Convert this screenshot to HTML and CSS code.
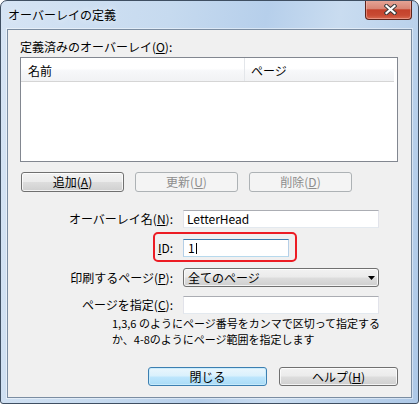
FILE: index.html
```html
<!DOCTYPE html>
<html lang="ja">
<head>
<meta charset="utf-8">
<title>オーバーレイの定義</title>
<link rel="stylesheet" href="styles.css">
</head>
<body>
<div class="window">
  <div class="titlebar">
    <span class="title">オーバーレイの定義</span>
    <div class="close">
      <svg width="13" height="11" viewBox="0 0 13 11">
        <path d="M2.5 2 L10.5 9 M10.5 2 L2.5 9" stroke="#3a3a3a" stroke-width="4.2" stroke-linecap="square" fill="none"/>
        <path d="M2.5 2 L10.5 9 M10.5 2 L2.5 9" stroke="#ffffff" stroke-width="2.2" stroke-linecap="square" fill="none"/>
      </svg>
    </div>
  </div>
  <div class="client">
    <div class="group-label">定義済みのオーバーレイ(<u>O</u>):</div>
    <div class="listview">
      <div class="lv-header">
        <div class="col col-name">名前</div>
        <div class="col col-page">ページ</div>
      </div>
    </div>
    <div class="btn-row">
      <div class="btn">追加(<u>A</u>)</div>
      <div class="btn disabled">更新(<u>U</u>)</div>
      <div class="btn disabled">削除(<u>D</u>)</div>
    </div>
    <div class="form">
      <div class="field">
        <span class="field-label">オーバーレイ名(<u>N</u>):</span>
        <div class="input">LetterHead</div>
      </div>
      <div class="field id-field">
        <div class="id-box">
          <span class="id-label"><u>I</u>D:</span>
          <div class="input focused">1<span class="caret"></span></div>
        </div>
      </div>
      <div class="field select-field">
        <span class="field-label">印刷するページ(<u>P</u>):</span>
        <div class="select">
          <span>全てのページ</span>
          <svg width="7" height="4" viewBox="0 0 7 4"><path d="M0 0 H7 L3.5 4 Z" fill="#000"/></svg>
        </div>
      </div>
      <div class="field spec-field">
        <span class="field-label">ページを指定(<u>C</u>):</span>
        <div class="input"></div>
      </div>
      <div class="hint">
        <div class="hint-line">1,3,6 のようにページ番号をカンマで区切って指定する</div>
        <div class="hint-line">か、4-8のようにページ範囲を指定します</div>
      </div>
    </div>
    <div class="footer">
      <div class="btn wide default">閉じる</div>
      <div class="btn wide">ヘルプ(<u>H</u>)</div>
    </div>
  </div>
</div>
</body>
</html>
```
FILE: styles.css
```css
* { box-sizing: border-box; }

body {
  margin: 0;
  background: #ffffff;
  font: 12px/14px "Noto Sans CJK JP", "Noto Sans", sans-serif;
  color: #000;
}

u { text-decoration: underline; text-underline-offset: 1px; }

.window {
  width: 419px;
  height: 404px;
  border: 1px solid #3f4f62;
  border-radius: 7px 7px 3px 3px;
  background: linear-gradient(100deg, #d6e4f4 0%, #c6daef 35%, #b6cfeb 55%, #c9dcf0 70%, #adc8e7 100%);
  padding: 0 6px 5px 6px;
  display: flex;
  flex-direction: column;
  overflow: hidden;
}

.titlebar {
  height: 28px;
  display: flex;
  justify-content: space-between;
  align-items: flex-start;
}

.title {
  margin: 7px 0 0 1px;
  color: #000;
  text-shadow: 0 0 6px rgba(255,255,255,0.8);
}

.close {
  margin-top: -1px;
  width: 47px;
  height: 20px;
  border: 1px solid #5e241b;
  border-top: none;
  border-radius: 0 0 4px 4px;
  background: linear-gradient(#e6a799 0%, #d98675 45%, #c4412b 52%, #c84a33 80%, #d86a50 100%);
  box-shadow: inset 0 0 0 1px rgba(255,200,190,0.45);
  display: flex;
  align-items: center;
  justify-content: center;
  padding-left: 3px;
}

.client {
  flex: 1;
  border: 1px solid #7b8da2;
  box-shadow: 0 0 0 1px rgba(255,255,255,0.45);
  background: #f0f0f0;
  padding: 9px 13px 0 12px;
}

.group-label {
  line-height: 16px;
}

.listview {
  margin-top: 2px;
  height: 105px;
  border: 1px solid #828790;
  background: #fff;
}

.lv-header {
  display: flex;
  height: 24px;
  margin-right: 3px;
  border-bottom: 1px solid #d5d5d5;
  background: linear-gradient(#ffffff 0%, #ffffff 45%, #f7f8fa 55%, #f1f2f4 100%);
}

.col {
  line-height: 23px;
  padding-top: 1px;
}

.col-name {
  width: 224px;
  padding-left: 7px;
  border-right: 1px solid #e3e6ea;
}

.col-page {
  padding-left: 6px;
}

.btn-row {
  display: flex;
  gap: 11px;
  margin-top: 10px;
  padding-left: 1px;
}

.btn {
  width: 103px;
  height: 20px;
  border: 1px solid #707070;
  border-radius: 3px;
  background: linear-gradient(#f2f2f2 0%, #ebebeb 48%, #dddddd 52%, #cfcfcf 100%);
  box-shadow: inset 0 0 0 1px rgba(255,255,255,0.75);
  display: flex;
  align-items: center;
  justify-content: center;
  color: #000;
}

.btn.disabled {
  border-color: #adb2b5;
  background: #f4f4f4;
  box-shadow: none;
  color: #8d8d8d;
}

.btn.wide {
  width: 119px;
  height: 19px;
}

.btn.default {
  border-color: #3c7fb1;
  background: linear-gradient(#eaf6fd 0%, #d9f0fc 48%, #bee6fd 52%, #a9dbf6 100%);
  box-shadow: inset 0 0 0 1px rgba(200,235,252,0.9);
}

.form {
  margin-top: 18px;
}

.field {
  display: flex;
  align-items: center;
}

.field-label {
  width: 153px;
  margin-right: 10px;
  text-align: right;
  white-space: nowrap;
}

.input {
  width: 196px;
  height: 18px;
  background: #fff;
  border: 1px solid #e2e3ea;
  border-top-color: #abadb3;
  border-bottom-color: #e3e9ef;
  padding-left: 3px;
  line-height: 16px;
  display: flex;
  align-items: center;
}

.input.focused {
  width: 106px;
  border-color: #b5cfe7;
  border-top-color: #3d7bad;
  border-bottom-color: #b7d9ed;
  padding-left: 4px;
}

.caret {
  width: 1px;
  height: 11px;
  background: #000;
  margin-left: 1px;
}

.id-field {
  margin-top: 4px;
}

.id-box {
  margin-left: 133px;
  height: 30px;
  border: 2px solid #ec1c24;
  border-radius: 5px;
  padding: 5px 6px 3px 0;
  display: flex;
  align-items: center;
}

.id-label {
  width: 18px;
  margin-right: 10px;
  text-align: right;
}

.select-field {
  margin-top: 6px;
}

.select {
  width: 196px;
  height: 19px;
  border: 1px solid #707070;
  border-radius: 3px;
  background: linear-gradient(#f2f2f2 0%, #ebebeb 48%, #dddddd 52%, #cfcfcf 100%);
  box-shadow: inset 0 0 0 1px rgba(255,255,255,0.75);
  display: flex;
  align-items: center;
  justify-content: space-between;
  padding: 0 3px 0 4px;
}

.spec-field {
  margin-top: 9px;
}

.hint {
  margin: 1px 0 0 92px;
}

.hint-line {
  font-size: 11px;
  line-height: 16px;
  white-space: nowrap;
}

.footer {
  margin-top: 20px;
  display: flex;
  justify-content: flex-end;
  gap: 12px;
}
```
